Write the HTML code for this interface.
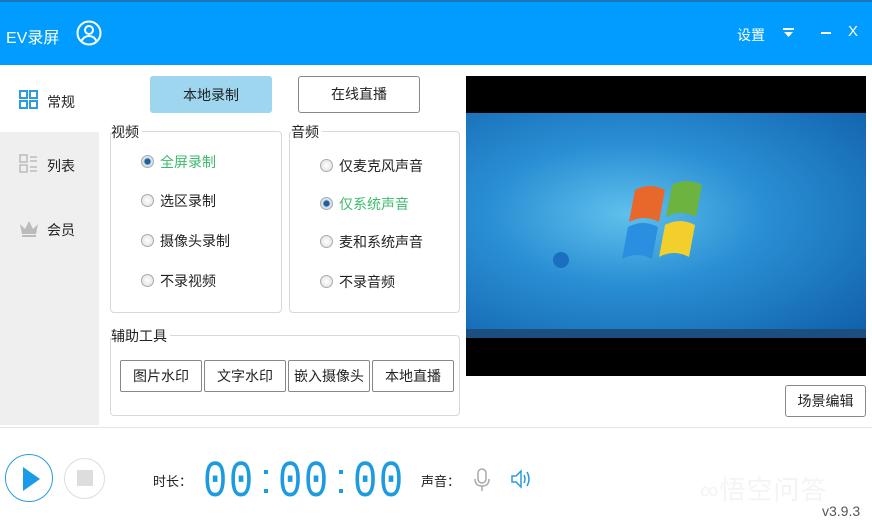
<!DOCTYPE html>
<html><head><meta charset="utf-8"><style>
*{margin:0;padding:0;box-sizing:border-box}
body{width:872px;height:521px;position:relative;overflow:hidden;background:#fff;font-family:"Liberation Sans","Noto Sans CJK SC",sans-serif;font-size:14px;color:#222}
.a{position:absolute}
.top{left:0;top:0;width:872px;height:65px;background:#009cff;border-top:2px solid #1a74b8}
.side{left:0;top:132px;width:99px;height:293px;background:#efefef}
.btn{position:absolute;border:1px solid #888;border-radius:3px;background:#fff;text-align:center;font-size:14px}
.grp{position:absolute;border:1px solid #d8d8d8;border-radius:4px}
.lg{position:absolute;background:#fff;padding-right:3px;font-size:14px}
.r{position:absolute;font-size:14px;padding-left:19px}
.r:before{content:"";position:absolute;left:0;top:3px;width:11px;height:11px;border-radius:50%;border:1px solid #aaa;background:radial-gradient(#fff,#ddd)}
.r.on{color:#3dbb6d}
.r.on:before{background:radial-gradient(#1f5f9a 35%,#cde 45%,#eee)}
.tb{position:absolute;top:360px;width:82px;height:32px;border:1px solid #888;border-radius:2px;text-align:center;line-height:30px;font-size:14px}
.dg{position:absolute;top:457px;font-family:"Liberation Mono",monospace;font-size:52px;line-height:52px;color:#1e9be0;transform:scaleX(0.78);transform-origin:0 0;letter-spacing:2px}
.cl{position:absolute;width:4px;height:4px;background:#1e9be0}
</style></head><body>
<div class="a top"></div>
<div class="a" style="left:6px;top:24px;color:#fff;font-size:16px">EV录屏</div>
<svg class="a" style="left:76px;top:20px" width="26" height="26" viewBox="0 0 26 26" fill="none" stroke="#fff" stroke-width="2"><circle cx="13" cy="13" r="11.5"/><circle cx="13" cy="10" r="4"/><path d="M5.5 21c2-4 5-5 7.5-5s5.5 1 7.5 5"/></svg>
<div class="a" style="left:737px;top:25px;color:#fff;font-size:14px">设置</div>
<svg class="a" style="left:783px;top:28px" width="12" height="10"><rect x="0" y="0" width="11" height="2" fill="#fff"/><path d="M1 4h9l-4.5 5z" fill="#fff"/></svg>
<div class="a" style="left:821px;top:32px;width:10px;height:2px;background:#fff"></div>
<div class="a" style="left:848px;top:23px;color:#fff;font-size:15px">X</div>

<div class="a side"></div>
<svg class="a" style="left:19px;top:90px" width="20" height="20"><g fill="none" stroke="#2e9be0" stroke-width="2"><rect x="1" y="1" width="7" height="7"/><rect x="11" y="1" width="7" height="7"/><rect x="1" y="11" width="7" height="7"/><rect x="11" y="11" width="7" height="7"/></g></svg>
<div class="a" style="left:47px;top:92px">常规</div>
<svg class="a" style="left:19px;top:154px" width="20" height="20"><g fill="none" stroke="#bbb" stroke-width="1.5"><rect x="1" y="1" width="7" height="7"/><rect x="1" y="11" width="7" height="7"/><path d="M11 3h7M11 7h7M11 13h7M11 17h7"/></g></svg>
<div class="a" style="left:47px;top:156px">列表</div>
<svg class="a" style="left:19px;top:220px" width="20" height="18"><path d="M1 4l5 5 4-8 4 8 5-5-2 10H3z" fill="#bbb"/><rect x="3" y="15" width="14" height="2" fill="#bbb"/></svg>
<div class="a" style="left:47px;top:220px">会员</div>

<div class="btn" style="left:150px;top:76px;width:122px;height:37px;line-height:37px;background:#9dd6ee;border-color:#9dd6ee">本地录制</div>
<div class="btn" style="left:298px;top:76px;width:122px;height:37px;line-height:35px">在线直播</div>

<div class="grp" style="left:110px;top:131px;width:172px;height:182px"></div>
<div class="lg" style="left:111px;top:122px">视频</div>
<div class="r on" style="left:141px;top:152px">全屏录制</div>
<div class="r" style="left:141px;top:191px">选区录制</div>
<div class="r" style="left:141px;top:231px">摄像头录制</div>
<div class="r" style="left:141px;top:271px">不录视频</div>

<div class="grp" style="left:289px;top:131px;width:171px;height:182px"></div>
<div class="lg" style="left:291px;top:122px">音频</div>
<div class="r" style="left:320px;top:156px">仅麦克风声音</div>
<div class="r on" style="left:320px;top:194px">仅系统声音</div>
<div class="r" style="left:320px;top:232px">麦和系统声音</div>
<div class="r" style="left:320px;top:272px">不录音频</div>

<div class="grp" style="left:110px;top:335px;width:350px;height:81px"></div>
<div class="lg" style="left:111px;top:326px">辅助工具</div>
<div class="tb" style="left:120px">图片水印</div>
<div class="tb" style="left:204px">文字水印</div>
<div class="tb" style="left:288px">嵌入摄像头</div>
<div class="tb" style="left:372px">本地直播</div>

<div class="a" style="left:466px;top:76px;width:400px;height:300px;background:#000"></div>
<div class="a" style="left:466px;top:113px;width:400px;height:225px;background:radial-gradient(ellipse at 40% 45%,#5fc0ec 0%,#2a8fd4 40%,#0f5ea8 100%)"></div>
<div class="a" style="left:466px;top:329px;width:400px;height:9px;background:#1a4f80"></div>
<svg class="a" style="left:620px;top:180px" width="100" height="95" viewBox="0 0 100 95"><path d="M15 10q15-8 30 0l-6 32q-15-8-30 0z" fill="#e8682c"/><path d="M52 5q15-8 30 0l-6 32q-15-8-30 0z" fill="#6cb33f"/><path d="M8 47q15-8 30 0l-6 32q-15-8-30 0z" fill="#2a8fe0"/><path d="M45 45q15-8 30 0l-6 32q-15-8-30 0z" fill="#f2cf2c"/></svg>
<div class="a" style="left:553px;top:252px;width:16px;height:16px;border-radius:50%;background:#1a6fc0"></div>
<div class="btn" style="left:785px;top:385px;width:81px;height:32px;line-height:31px">场景编辑</div>

<div class="a" style="left:0;top:427px;width:872px;height:1px;background:#e6e6e6"></div>
<div class="a" style="left:5px;top:454px;width:48px;height:48px;border-radius:50%;border:1.5px solid #2a9be0"></div>
<svg class="a" style="left:22px;top:466px" width="20" height="26"><path d="M1 1l17 12-17 12z" fill="#1a9be8"/></svg>
<div class="a" style="left:64px;top:458px;width:41px;height:41px;border-radius:50%;border:1px solid #ddd"></div>
<div class="a" style="left:77px;top:470px;width:16px;height:16px;background:#ddd"></div>
<div class="a" style="left:153px;top:471px;font-size:13px">时长：</div>
<div class="dg" style="left:203px">00</div>
<div class="cl" style="left:264px;top:470px"></div><div class="cl" style="left:264px;top:489px"></div>
<div class="dg" style="left:278px">00</div>
<div class="cl" style="left:339px;top:470px"></div><div class="cl" style="left:339px;top:489px"></div>
<div class="dg" style="left:353px">00</div>
<div class="a" style="left:421px;top:471px;font-size:13px">声音：</div>
<svg class="a" style="left:472px;top:468px" width="20" height="24" fill="none" stroke="#aaa" stroke-width="1.5"><rect x="6" y="1" width="8" height="14" rx="4"/><path d="M3 11q0 7 7 7t7-7M10 18v5"/></svg>
<svg class="a" style="left:510px;top:469px" width="24" height="20" fill="none" stroke="#2a9be0" stroke-width="1.5"><path d="M2 7h4l5-5v16l-5-5H2z"/><path d="M14 6q2 4 0 8M17 3q4 7 0 14"/></svg>
<div class="a" style="left:700px;top:470px;font-size:26px;color:#f4f4f4;letter-spacing:1px">∞悟空问答</div>
<div class="a" style="left:822px;top:503px;font-size:14px;color:#555">v3.9.3</div>
</body></html>
